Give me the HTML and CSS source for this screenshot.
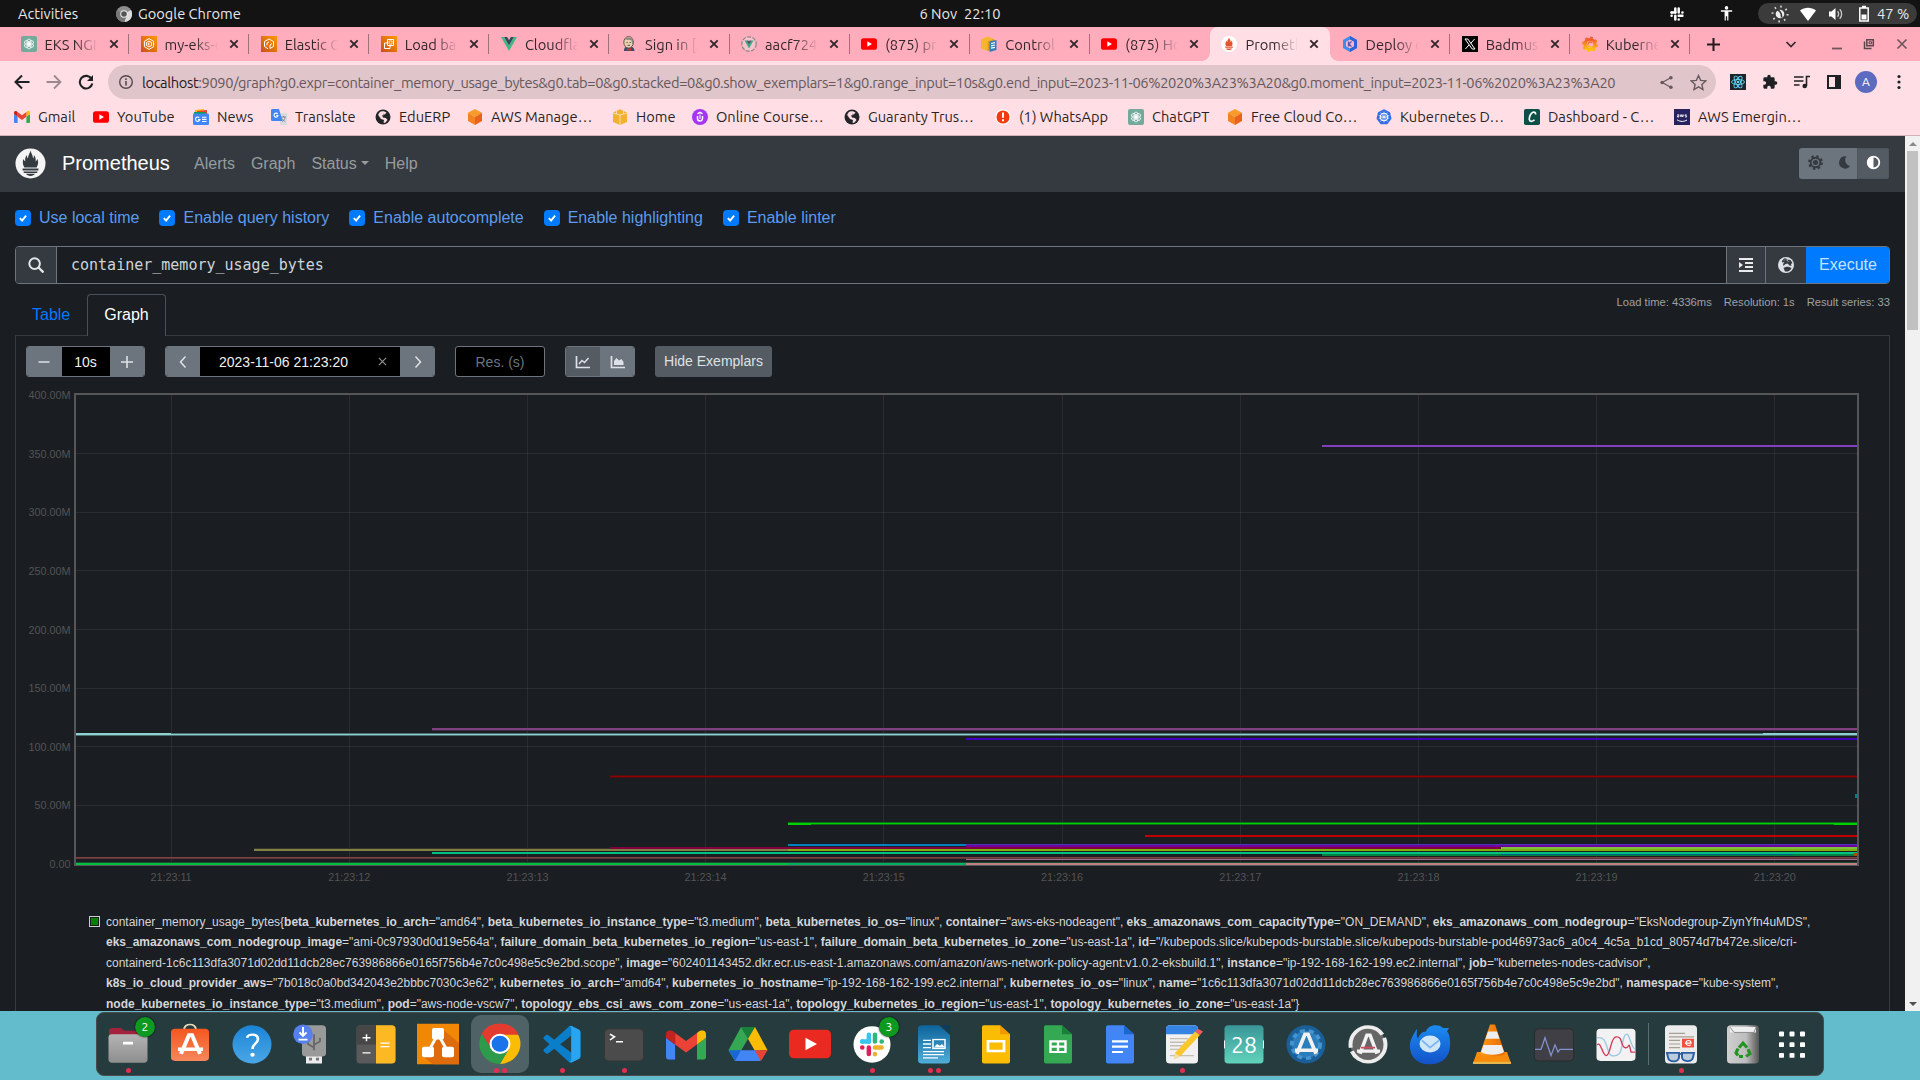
FILE: index.html
```html
<!DOCTYPE html>
<html lang="en">
<head>
<meta charset="utf-8">
<title>Prometheus Time Series Collection and Processing Server</title>
<link rel="stylesheet" href="styles.css">
</head>
<body>
<svg class="defs" aria-hidden="true">
  <linearGradient id="gOrange" x1="0" y1="1" x2="1" y2="0"><stop offset="0" stop-color="#c8511b"/><stop offset="1" stop-color="#f90"/></linearGradient>
  <linearGradient id="gGraf" x1="0" y1="0" x2="0" y2="1"><stop offset="0" stop-color="#f15a29"/><stop offset="1" stop-color="#fcc20f"/></linearGradient>
  <linearGradient id="gSlate" x1="0" y1="0" x2="0" y2="1"><stop offset="0" stop-color="#b4b4b4"/><stop offset="1" stop-color="#8e8e8e"/></linearGradient>
  <linearGradient id="gStore" x1="0" y1="0" x2="0" y2="1"><stop offset="0" stop-color="#f4571f"/><stop offset="1" stop-color="#f6875c"/></linearGradient>
  <linearGradient id="gHelp" x1="0" y1="0" x2="0" y2="1"><stop offset="0" stop-color="#1b84d6"/><stop offset="1" stop-color="#4ba7e6"/></linearGradient>
  <linearGradient id="gWriter" x1="0" y1="0" x2="0" y2="1"><stop offset="0" stop-color="#0d639b"/><stop offset="1" stop-color="#50aed8"/></linearGradient>
  <linearGradient id="gCal" x1="0" y1="0" x2="0" y2="1"><stop offset="0" stop-color="#3a9698"/><stop offset="1" stop-color="#62d3bb"/></linearGradient>
  <linearGradient id="gTrash" x1="0" y1="0" x2="1" y2="0"><stop offset="0" stop-color="#cfcfcf"/><stop offset=".6" stop-color="#bdbdbd"/><stop offset="1" stop-color="#555"/></linearGradient>
  <linearGradient id="gBird" x1="0" y1="0" x2="0" y2="1"><stop offset="0" stop-color="#1b8bf0"/><stop offset="1" stop-color="#1352c8"/></linearGradient>
  <linearGradient id="gCone" x1="0" y1="0" x2="1" y2="0"><stop offset="0" stop-color="#ff9a1a"/><stop offset="1" stop-color="#e86a00"/></linearGradient>

  <symbol id="knot" viewBox="0 0 16 16"><g fill="none" stroke="#fff" stroke-width=".9"><ellipse cx="8" cy="5.6" rx="2.3" ry="3.3" transform="rotate(0 8 8)"/><ellipse cx="8" cy="5.6" rx="2.3" ry="3.3" transform="rotate(60 8 8)"/><ellipse cx="8" cy="5.6" rx="2.3" ry="3.3" transform="rotate(120 8 8)"/><ellipse cx="8" cy="5.6" rx="2.3" ry="3.3" transform="rotate(180 8 8)"/><ellipse cx="8" cy="5.6" rx="2.3" ry="3.3" transform="rotate(240 8 8)"/><ellipse cx="8" cy="5.6" rx="2.3" ry="3.3" transform="rotate(300 8 8)"/></g></symbol>
  <symbol id="gpt" viewBox="0 0 16 16"><rect width="16" height="16" rx="2" fill="#74aa9c"/><use href="#knot" x="1" y="1" width="14" height="14"/></symbol>
  <symbol id="eks" viewBox="0 0 16 16"><rect width="16" height="16" fill="url(#gOrange)"/><path d="M8 2.6l4.6 2.7v5.4L8 13.4l-4.6-2.7V5.3zM8 5l2.6 1.5v3L8 11l-2.6-1.5v-3z" fill="none" stroke="#fff"/><path d="M7.300 6.500v3M9 6.500L7.500 8 9 9.500" fill="none" stroke="#fff" stroke-width=".8"/></symbol>
  <symbol id="ecs" viewBox="0 0 16 16"><rect width="16" height="16" fill="url(#gOrange)"/><path d="M7 12.800L3.500 10.500V5.500L8 3l4.500 2.500v5L9 12.500V9l2-1.500" fill="none" stroke="#fff"/><path d="M6 9.500V7l2-1" fill="none" stroke="#fff"/></symbol>
  <symbol id="ec2" viewBox="0 0 16 16"><rect width="16" height="16" fill="url(#gOrange)"/><path d="M6.500 3.500h6v6h-6zM9 9.500v3H3.500V7H6.500" fill="none" stroke="#fff"/><path d="M8 5h3v3H8z" fill="none" stroke="#fff" stroke-width=".7"/></symbol>
  <symbol id="vue" viewBox="0 0 16 16"><path d="M0 1h3.200L8 9.400 12.800 1H16L8 15z" fill="#41b883"/><path d="M3.200 1h3L8 4.200 9.800 1h3L8 9.400z" fill="#35495e"/></symbol>
  <symbol id="jenk" viewBox="0 0 16 16"><path d="M3 15c0-4 2-5 5-5s5.500 2 5.500 5z" fill="#3b4a66"/><ellipse cx="7.600" cy="6.300" rx="4.800" ry="5.800" fill="#e8cfae" stroke="#594b42" stroke-width=".9"/><path d="M3.600 3.600C5 .8 11 .6 12 5c.8 2 .5 3.500 0 4.500-1-1.500-1-3.500-1.500-5-2-1.200-4.500-.5-6.900-.9z" fill="#8b8580"/><path d="M5.500 6.500h1.200m2 0h1.200M6.500 9.300h2.500" stroke="#3a302c" stroke-width=".8"/><path d="M6 12l2 1 2-1v3l-2-1-2 1z" fill="#c33"/></symbol>
  <symbol id="globev" viewBox="0 0 16 16"><circle cx="8" cy="8" r="7.200" fill="#f8c3cd" stroke="#8a8589" stroke-width="1.200" stroke-dasharray="4 1.300"/><path d="M3.500 4.500h2.200L8 8.500l2.300-4h2.200L8 12.600z" fill="#41a883"/><path d="M5.700 4.500h1.600L8 5.700l.7-1.200h1.600L8 8.500z" fill="#35495e"/></symbol>
  <symbol id="yt" viewBox="0 0 16 16"><rect y="2.200" width="16" height="11.600" rx="2.600" fill="#f00"/><path d="M6.300 5.300v5.400L11 8z" fill="#fff"/></symbol>
  <symbol id="ctl" viewBox="0 0 16 16"><path d="M0 3.500L6.500.5 13 3v9.500L6.500 15 0 12.500z" fill="#f4b52f"/><path d="M6.500 5.500L13 3v9.500L6.500 15z" fill="#e29a1e"/><path d="M8.500 5.500l7-1.500v10l-7 2z" fill="#2f7fb8"/><path d="M10 7.500l4-.8M10 9.800l4-.8M10 12.200l4-.8" stroke="#fff" stroke-width="1.200"/></symbol>
  <symbol id="prom" viewBox="0 0 16 16"><circle cx="8" cy="8" r="8" fill="#fff"/><path d="M8 1.500c.4 2 2 2.700 1.700 4.700.8-.5.8-1.300.7-2 1.400 1.800 1.400 4.300.5 5.800H5.100c-1-1.800-.8-3.800.5-5.600 0 .8.200 1.400.7 1.800C6 4 7.800 3.300 8 1.500zM4.200 10.600h7.600v1.200H4.200zM5 12.400h6c-.7 2.300-5.300 2.300-6 0z" fill="#e6522c"/></symbol>
  <symbol id="promlogo" viewBox="0 0 32 32"><circle cx="16" cy="16" r="15.500" fill="#f4f4f4"/><path d="M16 2.500c.5 3 2.600 4.600 2.600 8.300.9-1 1-2.300.9-3.700 2.200 2.400 1.800 5 1.900 6.900.9-.8 1.500-1.500 1.900-2.600 1.200 3.500.4 6.400-1 8.600H9.700c-1.700-2.500-2-5-1.200-8.600.5 1.100 1.100 1.800 2 2.600 0-2.500-.3-4.500 1.900-6.900 0 1.500.1 2.700 1 3.700C13.400 7.400 15.500 5.500 16 2.500zM7.800 21.200h16.400v2H7.800zM9 24.300h14v1.400H9zM11.500 26.700h9c-1 2.800-8 2.800-9 0z" fill="#343a40"/></symbol>
  <symbol id="hex" viewBox="0 0 16 16"><path d="M8 0l7 4v8l-7 4-7-4V4z" fill="#3a8df2"/><path d="M8 0l7 4v8l-7 4z" fill="#2f62d8"/><path d="M8 3.500l4 2.300v4.400l-4 2.300-4-2.300V5.800z" fill="#fbb5c4"/><path d="M6.500 5.500v5M9.500 5.500L6.800 8l2.700 2.500" stroke="#5b4fb8" stroke-width="1.200" fill="none"/></symbol>
  <symbol id="x" viewBox="0 0 16 16"><rect width="16" height="16"/><path d="M3 3h2.800l7.200 10h-2.800zM12.600 3L8.700 7.400M7.200 8.800L3.400 13" fill="none" stroke="#fff"/></symbol>
  <symbol id="graf" viewBox="0 0 16 16"><circle cx="8" cy="8.500" r="5" fill="none" stroke="url(#gGraf)" stroke-width="3.200"/><circle cx="8" cy="8.500" r="7" fill="none" stroke="url(#gGraf)" stroke-width="1.800" stroke-dasharray="2.700 2.800"/><path d="M10.500 10.200a2.600 2.600 0 1 1-.2-3.300" fill="none" stroke="url(#gGraf)" stroke-width="1.300"/></symbol>
  <symbol id="gm" viewBox="0 0 48 36"><path d="M3.300 36h7.600V17.500L0 9.300v23.400C0 34.500 1.500 36 3.300 36z" fill="#4285f4"/><path d="M37.100 36h7.600c1.800 0 3.300-1.500 3.300-3.300V9.300l-10.900 8.200z" fill="#34a853"/><path d="M37.100 3.300v14.200L48 9.300V5c0-4-4.600-6.300-7.900-3.900z" fill="#fbbc04"/><path d="M10.900 17.500V3.300L24 13.100 37.100 3.300v14.200L24 27.300z" fill="#ea4335"/><path d="M0 5v4.300l10.900 8.200V3.300L7.900 1.100C4.600-1.300 0 1 0 5z" fill="#c5221f"/></symbol>
  <symbol id="news" viewBox="0 0 16 16"><path d="M2 1l9-1 .6 5H2z" fill="#fbbc04"/><path d="M4 2l10-1v5H4z" fill="#ea4335"/><path d="M1 3h12v4H1z" fill="#0c9d58"/><rect y="4.500" width="16" height="11.500" rx="1.200" fill="#4285f4"/><path d="M6.300 8.600a2.200 2.200 0 1 0 .6 2H5M9 8.300h4.500M9 10.400h4.500M9 12.500h4.500" fill="none" stroke="#fff" stroke-width="1.100"/></symbol>
  <symbol id="tr" viewBox="0 0 16 16"><path d="M7 4h9v12H9.500z" fill="#d8dbe0"/><path d="M0 1.300C0 .6.600 0 1.300 0H8l3.500 12H1.300C.6 12 0 11.400 0 10.700z" fill="#4285f4"/><path d="M6.700 5a2 2 0 1 0 .3 1.500H5.300" fill="none" stroke="#fff" stroke-width="1.100"/><path d="M10 8h5M12.500 7v1M11 12.500c2-1 3-2.500 3-4.500M11.200 9.500c.5 1.500 1.700 2.500 3 3" stroke="#777" stroke-width=".8" fill="none"/></symbol>
  <symbol id="globe" viewBox="0 0 16 16"><circle cx="8" cy="8" r="7.500" fill="#222428"/><path d="M6 2.500c2.500-.5 3.500 0 5.500 1L9.500 6 7 6.500 8 8.500l3 .5 1.500 2-2.500 3-1.500-.5.500-2.500-3-1-2.800-4C3.500 4.500 4.500 3 6 2.500z" fill="#fbdbe2"/><path d="M8 4.500L11 6.500l3-.5c0 2-.5 3-1.500 4L10 8z" fill="#222428"/></symbol>
  <symbol id="cube" viewBox="0 0 16 16"><path d="M8 0l7 3.800L8 8 1 3.800z" fill="#f99b2b"/><path d="M1 3.800L8 8v8l-7-4z" fill="#f58220"/><path d="M15 3.800L8 8v8l7-4z" fill="#e9631a"/></symbol>
  <symbol id="crate" viewBox="0 0 16 16"><path d="M1 3.500L8 .3l7 3.200V13l-7 3-7-3z" fill="#f2b12e"/><path d="M1 4l7 2 7-2M8 6v10M4.500 5V2M11.500 5V2" stroke="#fbe0c0" stroke-width=".9" fill="none"/></symbol>
  <symbol id="udemy" viewBox="0 0 16 16"><circle cx="8" cy="8" r="8" fill="#a435f0"/><path d="M5.500 7v2.500a2.500 2.500 0 0 0 5 0V7M5.500 4.800L8 3.400l2.500 1.400" fill="none" stroke="#fff" stroke-width="1.500"/><path d="M8 5.500V10" stroke="#fff"/></symbol>
  <symbol id="alert" viewBox="0 0 16 16"><circle cx="8" cy="8" r="7.200" fill="#f33b0c" stroke="#fff" stroke-width="1.300"/><path d="M8 3.500v5.300M8 10.200v2" stroke="#fff" stroke-width="2"/></symbol>
  <symbol id="k8s" viewBox="0 0 16 16"><path d="M8 .3l6 2.900 1.500 6.500-4.200 5.500H4.700L.5 9.700 2 3.200z" fill="#326ce5"/><circle cx="8" cy="8" r="3.700" fill="none" stroke="#fff" stroke-width="1.100"/><path d="M8 2.500v11M2.700 6.500l10.600 3M13.300 6.500L2.700 9.500M4.500 12.500l7-9M11.500 12.500l-7-9" stroke="#fff" stroke-width=".6"/></symbol>
  <symbol id="cdash" viewBox="0 0 16 16"><rect width="16" height="16" rx="1.800" fill="#0b4f46"/><path d="M11.500 5.500c.5-2-1-2.700-2.500-2.200C6.500 4.200 5 8 5.300 10.500c.3 2.600 3.500 2.200 5.200.3" fill="none" stroke="#fff" stroke-width="1.700"/></symbol>
  <symbol id="awsb" viewBox="0 0 16 16"><rect width="16" height="16" fill="#272260"/><path d="M3 10.800c3.500 2.200 7 2 10 .2" stroke="#fff" fill="none"/><path d="M3.200 5.800h1.600V8H3.400V6.900h1.400M6.200 5.500L7 8l.9-2.500L8.800 8l.8-2.500M12.600 5.800h-1.500v1h1.500V8H11" stroke="#fff" stroke-width=".8" fill="none"/></symbol>
  <symbol id="close" viewBox="0 0 10 10"><path d="M1.300 1.300l7.400 7.400M8.700 1.300L1.300 8.700" stroke="currentColor" stroke-width="1.900"/></symbol>
  <symbol id="slackw" viewBox="0 0 16 16"><g stroke-width="2.500" stroke-linecap="round" fill="none"><path d="M6.300 2.500v4M2.600 6.400h.1" stroke="var(--a)"/><path d="M2.700 6.400h3.600" stroke="var(--a)"/><path d="M9.700 2.600v3.800M13.400 6.400h.1" stroke="var(--b)"/><path d="M13.400 9.700H9.700M9.700 13.400v.1" stroke="var(--c)"/><path d="M6.300 13.400V9.700M2.600 9.700h.1" stroke="var(--d)"/></g></symbol>
</svg>

<header class="topbar">
  <div class="tb-left"><span class="act">Activities</span>
    <svg class="tb-chrome" viewBox="0 0 16 16"><circle cx="8" cy="8" r="8" fill="#8d8d8d"/><path d="M8 8L15 4a8 8 0 0 1-6 12z" fill="#dcdcdc"/><path d="M1 4.200A8 8 0 0 0 8 16l3-6z" fill="#777"/><circle cx="8" cy="8" r="3.800" fill="#eee"/><circle cx="8" cy="8" r="2.800" fill="#555"/></svg>
    <span class="gc">Google Chrome</span></div>
  <div class="clock">6 Nov&nbsp; 22:10</div>
  <div class="tb-right">
    <svg class="ic-slack" viewBox="0 0 16 16"><use href="#slackw"/></svg>
    <svg class="ic-acc" viewBox="0 0 16 16" fill="#fff"><circle cx="8" cy="2" r="1.900"/><path d="M2 4.500h12V6H10v9.500H8.700V11H7.300v4.500H6V6H2z"/></svg>
    <div class="pill">
      <svg viewBox="0 0 18 18"><circle cx="9" cy="9" r="4.300" fill="#eee"/><path d="M6 5c2 0 5 3 4.500 7.500" stroke="#3b3b3b" stroke-width="1.600" fill="none"/><circle cx="9" cy="9" r="7.500" fill="none" stroke="#ddd" stroke-width="2" stroke-dasharray="1.500 4.400"/></svg>
      <svg viewBox="0 0 18 18"><path d="M1 5.500C5.500 1.700 12.500 1.700 17 5.500L9 16z" fill="#fff"/></svg>
      <svg viewBox="0 0 18 18"><path d="M2 6.500h2.500L8.500 3v12l-4-3.500H2z" fill="#fff"/><path d="M10.500 6.300c1.500 1.500 1.500 4 0 5.400M12.700 4.300c2.600 2.500 2.600 7 0 9.400" stroke="#ccc" stroke-width="1.300" fill="none"/></svg>
      <svg viewBox="0 0 18 18"><path d="M7 1.500h4M4.800 3h8.400v13H4.800z" fill="none" stroke="#fff" stroke-width="1.500"/><path d="M6.500 9.500h5v5h-5z" fill="#fff"/></svg>
      <span>47 %</span>
    </div>
  </div>
</header>

<div class="tabs">
  <div class="tab"><svg><use href="#gpt"/></svg><b>EKS NGINX</b><svg class="x"><use href="#close"/></svg></div>
  <div class="tab"><svg><use href="#eks"/></svg><b>my-eks-cluster</b><svg class="x"><use href="#close"/></svg></div>
  <div class="tab"><svg><use href="#ecs"/></svg><b>Elastic Container</b><svg class="x"><use href="#close"/></svg></div>
  <div class="tab"><svg><use href="#ec2"/></svg><b>Load balancers</b><svg class="x"><use href="#close"/></svg></div>
  <div class="tab"><svg><use href="#vue"/></svg><b>Cloudflare</b><svg class="x"><use href="#close"/></svg></div>
  <div class="tab"><svg><use href="#jenk"/></svg><b>Sign in [Jenkins]</b><svg class="x"><use href="#close"/></svg></div>
  <div class="tab"><svg><use href="#globev"/></svg><b>aacf724d</b><svg class="x"><use href="#close"/></svg></div>
  <div class="tab"><svg><use href="#yt"/></svg><b>(875) prom</b><svg class="x"><use href="#close"/></svg></div>
  <div class="tab"><svg><use href="#ctl"/></svg><b>Control T</b><svg class="x"><use href="#close"/></svg></div>
  <div class="tab nosep"><svg><use href="#yt"/></svg><b>(875) How</b><svg class="x"><use href="#close"/></svg></div>
  <div class="tab active"><svg><use href="#prom"/></svg><b>Prometheus</b><svg class="x"><use href="#close"/></svg></div>
  <div class="tab"><svg><use href="#hex"/></svg><b>Deploy on</b><svg class="x"><use href="#close"/></svg></div>
  <div class="tab"><svg><use href="#x"/></svg><b>Badmus K</b><svg class="x"><use href="#close"/></svg></div>
  <div class="tab"><svg><use href="#graf"/></svg><b>Kubernetes</b><svg class="x"><use href="#close"/></svg></div>
  <svg class="plus" viewBox="0 0 12 12"><path d="M6 0v12M0 6h12" stroke="#26191d" stroke-width="1.900"/></svg>
  <div class="wins">
    <svg viewBox="0 0 12 12"><path d="M1.500 4L6 8.500 10.500 4" fill="none" stroke="#33262a" stroke-width="1.700"/></svg>
    <svg viewBox="0 0 12 12"><path d="M1 10.500h10" stroke="#6e565c" stroke-width="1.800"/></svg>
    <svg viewBox="0 0 12 12"><path d="M3.800 1.800h6.500v6H3.800zM1.500 3.500v7h7" fill="none" stroke="#5b484e" stroke-width="1.500"/><path d="M6 3.800h2.500v2H6z" fill="none" stroke="#5b484e"/></svg>
    <svg viewBox="0 0 12 12"><path d="M1.500 1.500l9 9M10.500 1.500l-9 9" stroke="#6e565c" stroke-width="1.700"/></svg>
  </div>
</div>

<div class="toolbar">
  <svg class="nav1" viewBox="0 0 16 16"><path d="M15.500 8H2M8 1.500L1.500 8 8 14.500" fill="none" stroke="#1f2023" stroke-width="2"/></svg>
  <svg class="nav2" viewBox="0 0 16 16"><path d="M.5 8H14M8 1.500L14.500 8 8 14.500" fill="none" stroke="#9c898e" stroke-width="1.800"/></svg>
  <svg class="nav3" viewBox="0 0 16 16"><path d="M13.600 5A6.300 6.300 0 1 0 14.300 9.500" fill="none" stroke="#1f2023" stroke-width="2.100"/><path d="M15 1v6H9z" fill="#1f2023"/></svg>
  <div class="omni">
    <svg class="info" viewBox="0 0 16 16"><circle cx="8" cy="8" r="6.300" fill="none" stroke="#55494d" stroke-width="1.400"/><path d="M8 7v4.500M8 4.300v1.600" stroke="#55494d" stroke-width="1.600"/></svg>
    <div class="url"><i>localhost</i>:9090/graph?g0.expr=container_memory_usage_bytes&amp;g0.tab=0&amp;g0.stacked=0&amp;g0.show_exemplars=1&amp;g0.range_input=10s&amp;g0.end_input=2023-11-06%2020%3A23%3A20&amp;g0.moment_input=2023-11-06%2020%3A23%3A20</div>
    <svg class="share" viewBox="0 0 16 16"><path d="M12.500 3L3.500 8l9 5" fill="none" stroke="#67595d" stroke-width="1.300"/><circle cx="12.700" cy="2.900" r="1.900" fill="#67595d"/><circle cx="3.300" cy="8" r="1.900" fill="#67595d"/><circle cx="12.700" cy="13.100" r="1.900" fill="#67595d"/></svg>
    <svg class="star" viewBox="0 0 16 16"><path d="M8 1.500l2 4.500 4.800.5-3.600 3.300 1 4.800L8 12.100l-4.200 2.500 1-4.800L1.200 6.500 6 6z" fill="none" stroke="#67595d" stroke-width="1.300"/></svg>
  </div>
  <svg class="e1" viewBox="0 0 16 16"><rect width="16" height="16" fill="#20232a"/><g fill="none" stroke="#61dafb" stroke-width=".9"><ellipse cx="8" cy="8" rx="6.500" ry="2.500"/><ellipse cx="8" cy="8" rx="6.500" ry="2.500" transform="rotate(60 8 8)"/><ellipse cx="8" cy="8" rx="6.500" ry="2.500" transform="rotate(120 8 8)"/></g><circle cx="8" cy="8" r="1.300" fill="#61dafb"/></svg>
  <svg class="e2" viewBox="0 0 24 24"><path d="M20.500 11H19V7a2 2 0 0 0-2-2h-4V3.500a2.500 2.500 0 0 0-5 0V5H4a2 2 0 0 0-2 2v3.800h1.500a2.700 2.700 0 0 1 0 5.400H2V20a2 2 0 0 0 2 2h3.800v-1.500a2.700 2.700 0 0 1 5.400 0V22H17a2 2 0 0 0 2-2v-4h1.500a2.500 2.500 0 0 0 0-5z" fill="#1f2023"/></svg>
  <svg class="e3" viewBox="0 0 16 16"><path d="M0 3h9.500M0 7h9.500M0 11h5.500M12.500 12V2.500H16" fill="none" stroke="#1f2023" stroke-width="1.600"/><circle cx="10.700" cy="12" r="2.300" fill="#1f2023"/></svg>
  <svg class="e4" viewBox="0 0 14 14"><path d="M1 1h12v12H1z" fill="none" stroke="#1f2023" stroke-width="2"/><path d="M8 1h5v12H8z" fill="#1f2023"/></svg>
  <div class="avatar">A</div>
  <svg class="e6" viewBox="0 0 4 16" fill="#1f2023"><circle cx="2" cy="2.500" r="1.600"/><circle cx="2" cy="8" r="1.600"/><circle cx="2" cy="13.500" r="1.600"/></svg>
</div>

<nav class="bookmarks">
  <a><svg viewBox="0 -6 48 48"><use href="#gm" width="48" height="36"/></svg>Gmail</a>
  <a><svg><use href="#yt"/></svg>YouTube</a>
  <a><svg><use href="#news"/></svg>News</a>
  <a><svg><use href="#tr"/></svg>Translate</a>
  <a><svg><use href="#globe"/></svg>EduERP</a>
  <a><svg><use href="#cube"/></svg>AWS Manage…</a>
  <a><svg><use href="#crate"/></svg>Home</a>
  <a><svg><use href="#udemy"/></svg>Online Course…</a>
  <a><svg><use href="#globe"/></svg>Guaranty Trus…</a>
  <a><svg><use href="#alert"/></svg>(1) WhatsApp</a>
  <a><svg><use href="#gpt"/></svg>ChatGPT</a>
  <a><svg><use href="#cube"/></svg>Free Cloud Co…</a>
  <a><svg><use href="#k8s"/></svg>Kubernetes D…</a>
  <a><svg><use href="#cdash"/></svg>Dashboard - C…</a>
  <a><svg><use href="#awsb"/></svg>AWS Emergin…</a>
</nav>

<div class="view">
<main class="page">
  <nav class="navbar">
    <svg class="logo"><use href="#promlogo"/></svg>
    <span class="brand">Prometheus</span>
    <span class="nl">Alerts</span><span class="nl">Graph</span><span class="nl caret">Status</span><span class="nl">Help</span>
    <div class="theme">
      <span><svg viewBox="0 0 16 16"><circle cx="8" cy="8" r="5.100" fill="none" stroke="#343a40" stroke-width="2"/><circle cx="8" cy="8" r="2.700" fill="#343a40"/><circle cx="8" cy="8" r="6.700" fill="none" stroke="#343a40" stroke-width="2.400" stroke-dasharray="2.600 2.660"/></svg></span>
      <span class="moon"><svg viewBox="0 0 16 16"><path d="M10 1.500A6.500 6.500 0 1 0 14 11.800 6.500 6.500 0 0 1 10 1.500z" fill="#343a40"/></svg></span>
      <span class="on"><svg viewBox="0 0 16 16"><circle cx="8" cy="8" r="6.200" fill="none" stroke="#fff" stroke-width="1.900"/><path d="M8 1.500a6.500 6.500 0 0 0 0 13z" fill="#fff"/></svg></span>
    </div>
  </nav>

  <div class="checks">
    <label><svg viewBox="0 0 16 16"><rect width="16" height="16" rx="4" fill="#007bff"/><path d="M4.800 8.200l2.300 2.300 4-4.800" fill="none" stroke="#fff" stroke-width="1.900"/></svg>Use local time</label>
    <label><svg viewBox="0 0 16 16"><rect width="16" height="16" rx="4" fill="#007bff"/><path d="M4.800 8.200l2.300 2.300 4-4.800" fill="none" stroke="#fff" stroke-width="1.900"/></svg>Enable query history</label>
    <label><svg viewBox="0 0 16 16"><rect width="16" height="16" rx="4" fill="#007bff"/><path d="M4.800 8.200l2.300 2.300 4-4.800" fill="none" stroke="#fff" stroke-width="1.900"/></svg>Enable autocomplete</label>
    <label><svg viewBox="0 0 16 16"><rect width="16" height="16" rx="4" fill="#007bff"/><path d="M4.800 8.200l2.300 2.300 4-4.800" fill="none" stroke="#fff" stroke-width="1.900"/></svg>Enable highlighting</label>
    <label><svg viewBox="0 0 16 16"><rect width="16" height="16" rx="4" fill="#007bff"/><path d="M4.800 8.200l2.300 2.300 4-4.800" fill="none" stroke="#fff" stroke-width="1.900"/></svg>Enable linter</label>
  </div>

  <div class="expr">
    <span class="pre"><svg viewBox="0 0 16 16"><circle cx="6.600" cy="6.600" r="5.300" fill="none" stroke="#e4e6e8" stroke-width="2"/><path d="M10.500 10.500l5 5" stroke="#e4e6e8" stroke-width="2.300"/></svg></span>
    <div class="field">container_memory_usage_bytes</div>
    <span class="btn-a"><svg viewBox="0 0 14 14"><path d="M0 1h14M6 5h8M6 9h8M0 13h14" stroke="#e8eaec" stroke-width="1.900"/><path d="M0 4v6l4-3z" fill="#e8eaec"/></svg></span>
    <span class="btn-b"><svg viewBox="0 0 16 16"><circle cx="8" cy="8" r="8" fill="#dee2e6"/><path d="M6 1.500l2-.3 1 1.300 3.500.5 2 3-1.500 1 .5 2-2-.5-2-2-2 .5-2 2-.5-2L6.500 5 4 5.500 3.800 4zM5.500 11c3-2 5-1.500 8 0-1 3-4 4-6.500 3.500z" fill="#343a40"/><path d="M8.500 3l2 1.500M6 3.500l1-1" stroke="#dee2e6" stroke-width=".8"/></svg></span>
    <span class="exec">Execute</span>
  </div>

  <div class="tabrow">
    <span class="t1">Table</span><span class="t2">Graph</span>
    <div class="stats"><span>Load time: 4336ms</span><span>Resolution: 1s</span><span>Result series: 33</span></div>
  </div>

  <section class="panel">
    <div class="controls">
      <div class="grp g1"><span><svg viewBox="0 0 14 14"><path d="M1.500 7h11" stroke="#dee2e6" stroke-width="1.600"/></svg></span><span class="in">10s</span><span><svg viewBox="0 0 14 14"><path d="M1 7h12M7 1v12" stroke="#dee2e6" stroke-width="1.600"/></svg></span></div>
      <div class="grp g2"><span><svg viewBox="0 0 14 14"><path d="M9.500 1.500L4.500 7l5 5.500" fill="none" stroke="#dee2e6" stroke-width="1.500"/></svg></span><span class="in">2023-11-06 21:23:20<svg viewBox="0 0 10 10"><path d="M1 1l8 8M9 1L1 9" stroke="#8d9297" stroke-width="1.300"/></svg></span><span><svg viewBox="0 0 14 14"><path d="M4.500 1.500l5 5.500-5 5.500" fill="none" stroke="#dee2e6" stroke-width="1.500"/></svg></span></div>
      <div class="res">Res. (s)</div>
      <div class="grp g3"><span class="on"><svg viewBox="0 0 16 16"><path d="M1.500 2v11.500H15" fill="none" stroke="#dee2e6" stroke-width="1.700"/><path d="M4 10l3-3.500 2.500 2L13.500 4" fill="none" stroke="#dee2e6" stroke-width="1.500"/></svg></span><span><svg viewBox="0 0 16 16"><path d="M1.500 2v11.500H15" fill="none" stroke="#dee2e6" stroke-width="1.700"/><path d="M4 11V7l2.500-3L9 6.500 11.500 5 13.500 8v3z" fill="#dee2e6"/></svg></span></div>
      <div class="hide">Hide Exemplars</div>
    </div>

    <svg class="chart" viewBox="16 385 1872 510" width="1872" height="510">
      <g stroke="#fff" stroke-opacity=".07">
        <path d="M171.500 395v469M349.500 395v469M527.500 395v469M705.500 395v469M883.500 395v469M1062.500 395v469M1240.500 395v469M1418.500 395v469M1596.500 395v469M1774.500 395v469"/>
        <path d="M76 453.500h1781M76 512.500h1781M76 570.500h1781M76 629.500h1781M76 688.500h1781M76 746.500h1781M76 805.500h1781"/>
      </g>
      <g class="ylab" text-anchor="end">
        <text x="70.500" y="399">400.00M</text><text x="70.500" y="457.600">350.00M</text><text x="70.500" y="516.200">300.00M</text><text x="70.500" y="574.800">250.00M</text><text x="70.500" y="633.500">200.00M</text><text x="70.500" y="692">150.00M</text><text x="70.500" y="750.700">100.00M</text><text x="70.500" y="809">50.00M</text><text x="70.500" y="868">0.00</text>
      </g>
      <g class="ylab" text-anchor="middle">
        <text x="171" y="881">21:23:11</text><text x="349.300" y="881">21:23:12</text><text x="527.500" y="881">21:23:13</text><text x="705.600" y="881">21:23:14</text><text x="883.800" y="881">21:23:15</text><text x="1062" y="881">21:23:16</text><text x="1240.200" y="881">21:23:17</text><text x="1418.400" y="881">21:23:18</text><text x="1596.600" y="881">21:23:19</text><text x="1774.700" y="881">21:23:20</text>
      </g>
      <path d="M75 394h1783v471H75z" fill="none" stroke="#545658" stroke-width="2"/>
      <path d="M1322 445h535v2h-535z" fill="#8040c0"/>
      <path d="M432 728h1425v2H432z" fill="#803f80"/><path d="M432 730h1425v1H432z" fill="#3d2841"/>
      <path d="M76 733h1781v3H76z" fill="#4c6e70"/><path d="M76 733h95v2H76zM171 734h1592v1H171zM1763 733h94v2h-94z" fill="#8cd0d0"/>
      <path d="M966 738h891v2H966z" fill="#4000c0"/>
      <path d="M610 775h1247v3H610z" fill="#4d0e10"/><path d="M610 776h1247v1H610z" fill="#900000"/>
      <path d="M1855 794h3v4h-3z" fill="#008080"/>
      <path d="M788 822h1069v3H788z" fill="#0b6f13"/><path d="M788 823h1069v1H788zM788 824h23v1h-23zM1834 824h23v1h-23z" fill="#00d000"/>
      <path d="M1145 835h712v2h-712z" fill="#c00000"/>
      <path d="M788 844h178v2H788z" fill="#0080c0"/><path d="M966 844h891v1H966z" fill="#4a35b5"/><path d="M966 845h891v2H966z" fill="#7000a0"/>
      <path d="M610 847h1247v2H610z" fill="#800040"/>
      <path d="M254 848h356v1H254z" fill="#35352a"/><path d="M254 849h1603v2H254z" fill="#808040"/>
      <path d="M788 849h1069v2H788z" fill="#80b010"/><path d="M1501 847h356v2h-356z" fill="#80c040"/>
      <path d="M432 852h1425v2H432z" fill="#00c080"/>
      <path d="M1322 854h535v2h-535z" fill="#008040"/><path d="M1501 854h292v1h-292z" fill="#005f78"/>
      <path d="M76 857h1781v1H76z" fill="#804040"/><path d="M76 858h1781v1H76z" fill="#5e3638"/><path d="M966 859h891v1H966z" fill="#a07090"/>
      <path d="M76 862h1781v1H76z" fill="#1d4a35"/><path d="M76 863h890v2H76z" fill="#00c040"/><path d="M788 863h178v2H788z" fill="#00b060"/><path d="M966 863h891v2H966z" fill="#c08080"/>
      <path d="M1854 853h3v3h-3z" fill="#a05000"/>
    </svg>

    <div class="legend">
      <i class="sw"></i>
      <div class="ltext">
        <p>container_memory_usage_bytes{<b>beta_kubernetes_io_arch</b>="amd64", <b>beta_kubernetes_io_instance_type</b>="t3.medium", <b>beta_kubernetes_io_os</b>="linux", <b>container</b>="aws-eks-nodeagent", <b>eks_amazonaws_com_capacityType</b>="ON_DEMAND", <b>eks_amazonaws_com_nodegroup</b>="EksNodegroup-ZiynYfn4uMDS",</p>
        <p><b>eks_amazonaws_com_nodegroup_image</b>="ami-0c97930d0d19e564a", <b>failure_domain_beta_kubernetes_io_region</b>="us-east-1", <b>failure_domain_beta_kubernetes_io_zone</b>="us-east-1a", <b>id</b>="/kubepods.slice/kubepods-burstable.slice/kubepods-burstable-pod46973ac6_a0c4_4c5a_b1cd_80574d7b472e.slice/cri-</p>
        <p>containerd-1c6c113dfa3071d02dd11dcb28ec763986866e0165f756b4e7c0c498e5c9e2bd.scope", <b>image</b>="602401143452.dkr.ecr.us-east-1.amazonaws.com/amazon/aws-network-policy-agent:v1.0.2-eksbuild.1", <b>instance</b>="ip-192-168-162-199.ec2.internal", <b>job</b>="kubernetes-nodes-cadvisor",</p>
        <p><b>k8s_io_cloud_provider_aws</b>="7b018c0a0bd342043e2bbbc7030c3e62", <b>kubernetes_io_arch</b>="amd64", <b>kubernetes_io_hostname</b>="ip-192-168-162-199.ec2.internal", <b>kubernetes_io_os</b>="linux", <b>name</b>="1c6c113dfa3071d02dd11dcb28ec763986866e0165f756b4e7c0c498e5c9e2bd", <b>namespace</b>="kube-system",</p>
        <p><b>node_kubernetes_io_instance_type</b>="t3.medium", <b>pod</b>="aws-node-vscw7", <b>topology_ebs_csi_aws_com_zone</b>="us-east-1a", <b>topology_kubernetes_io_region</b>="us-east-1", <b>topology_kubernetes_io_zone</b>="us-east-1a"}</p>
      </div>
    </div>
  </section>
</main>
<div class="scroll"><i class="up"></i><i class="thumb"></i><i class="down"></i></div>
</div>

<footer class="desk">
  <div class="dock">
    <div class="app d1"><svg viewBox="0 0 42 46"><path d="M2 8a3 3 0 0 1 3-3h9l3 3h20a3 3 0 0 1 3 3v8H2z" fill="#a5223f"/><rect x="1.500" y="12" width="39" height="32" rx="3.500" fill="url(#gSlate)"/><path d="M16 22h10" stroke="#fff" stroke-width="3"/></svg><em>2</em></div>
    <div class="app"><svg viewBox="0 0 42 46"><path d="M15 7a6 6 0 0 1 12 0" fill="none" stroke="#e6d9b8" stroke-width="2"/><rect x="2" y="6" width="38" height="36" rx="4" fill="url(#gStore)"/><path d="M12 34L20 13h3l8 21M9 29h25" fill="none" stroke="#fff" stroke-width="4"/></svg></div>
    <div class="app"><svg viewBox="0 0 42 46"><ellipse cx="21" cy="23.500" rx="19.500" ry="21.500" fill="url(#gHelp)"/><path d="M16 16c1-5 11-5 11 1.500 0 5-5.500 5-5.500 11" fill="none" stroke="#fff" stroke-width="2.600"/><circle cx="21.500" cy="35" r="2.200" fill="#fff"/></svg></div>
    <div class="app"><svg viewBox="0 0 42 46"><path d="M13 36h16v9H13z" fill="#ececec"/><rect x="9" y="2" width="24" height="35" rx="4" fill="#9a9a9a"/><path d="M16 40h3M23 40h3" stroke="#777" stroke-width="3"/><path d="M21 12v18M21 27l-6-4v-4M21 24l6-4v-4" fill="none" stroke="#666" stroke-width="1.800"/><ellipse cx="10" cy="12" rx="9.800" ry="11" fill="#5580ee"/><path d="M10 4v8M6.500 10l3.500 4 3.500-4M5.500 18h9" fill="none" stroke="#fff" stroke-width="2"/></svg></div>
    <div class="app"><svg viewBox="0 0 42 46"><rect x="1.500" y="2" width="39" height="43" rx="4" fill="#5a5a5a"/><path d="M1.500 23.500h20V2h-16a4 4 0 0 0-4 4z" fill="#474747"/><path d="M21 2h15.500a4 4 0 0 1 4 4v35a4 4 0 0 1-4 4H21z" fill="#fdb924"/><path d="M7.500 16h8M11.500 12v8M7.500 33h8M25.500 22h9M25.500 26h9" stroke="#fff" stroke-width="1.500"/></svg></div>
    <div class="app"><svg viewBox="0 0 42 46"><path d="M0 0h42v46H0z" fill="#f08705"/><path d="M25 6l17 16v24H16L5 36l14-20z" fill="#df6c0c"/><path d="M21 12L11 32M21 12l10 20" stroke="#fff" stroke-width="3"/><rect x="15" y="5" width="12" height="13" rx="2" fill="#fff"/><rect x="5" y="26" width="12" height="12" rx="2" fill="#fff"/><rect x="25" y="26" width="12" height="12" rx="2" fill="#fff"/></svg></div>
    <div class="app run"><svg viewBox="0 0 42 46"><g transform="translate(0 -1) scale(1 1.080)"><path d="M21 22L2.800 11.500A21 21 0 0 1 39.200 11.500z" fill="#ea4335"/><path d="M21 1a21 21 0 0 0-18.200 10.500L12 27l9-14.500h18.200A21 21 0 0 0 21 1z" fill="#e33b2e"/><path d="M39.200 12.500H21l9 14L21 43a21 21 0 0 0 18.200-30.500z" fill="#fbbc04"/><path d="M2.800 12A21 21 0 0 0 21 43l9-15.500-9 4-9-4.500z" fill="#2e9b4b"/><circle cx="21" cy="22" r="10.500" fill="#fff"/><circle cx="21" cy="22" r="8.400" fill="#1a73e8"/></g></svg></div>
    <div class="app d1"><svg viewBox="0 0 42 46"><g transform="translate(2.500 2.500) scale(1.540 1.730)"><path d="M23.150 2.587L18.210.210a1.494 1.494 0 0 0-1.705.290l-9.460 8.630-4.120-3.128a.999.999 0 0 0-1.276.057L.327 7.261A1 1 0 0 0 .326 8.740L3.899 12 .326 15.260a1 1 0 0 0 .001 1.479L1.650 17.940a.999.999 0 0 0 1.276.057l4.120-3.128 9.460 8.630a1.492 1.492 0 0 0 1.704.290l4.942-2.377A1.500 1.500 0 0 0 24 20.060V3.939a1.500 1.500 0 0 0-.850-1.352zm-5.146 14.861L10.826 12l7.178-5.448v10.896z" fill="#0a7ec8"/><path d="M16.800.3l1.400-.1 4.950 2.400.85 1.400v16l-.85 1.400-4.940 2.400-1.400-.2 1.200-1.200V1.500z" fill="#2aa4ee"/></g></svg></div>
    <div class="app d1"><svg viewBox="0 0 42 46"><rect x="1.500" y="6" width="39" height="36" rx="4" fill="#4b4b4b" stroke="#353535"/><path d="M7 12l4.500 3L7 18.500M13 20.500h7" fill="none" stroke="#fff" stroke-width="1.700"/></svg></div>
    <div class="app"><svg viewBox="0 0 42 46"><g transform="translate(1 7.500) scale(.835 .920)"><use href="#gm" width="48" height="36"/></g></svg></div>
    <div class="app"><svg viewBox="0 0 42 46"><path d="M14 4h14l-7 13z" fill="#188038"/><path d="M14 4l7 13L8 42 1.500 30z" fill="#34a853"/><path d="M28 4l12.500 26H27.500L21 17z" fill="#fbbc04"/><path d="M9 30h24L33.500 42H8z" fill="#4285f4"/><path d="M1.500 30H14L8 42z" fill="#1967d2"/><path d="M27.500 30h13L34 42z" fill="#ea4335"/></svg></div>
    <div class="app"><svg viewBox="0 0 42 46"><rect x="0" y="7" width="42" height="32" rx="5" fill="#ea2a20"/><path d="M16.500 16v14L28 23z" fill="#fff"/></svg></div>
    <div class="app d1 slack"><svg viewBox="0 0 42 46"><ellipse cx="21" cy="23.500" rx="18.500" ry="20.500" fill="#fff"/><g transform="translate(6.500 7.500) scale(.9 1)"><use href="#slackw" width="32" height="32"/></g></svg><em>3</em></div>
    <div class="app d2"><svg viewBox="0 0 42 46"><path d="M9 2h17l11 11v28a4 4 0 0 1-4 4H9a4 4 0 0 1-4-4V6a4 4 0 0 1 4-4z" fill="url(#gWriter)"/><path d="M29 2h8v9z" fill="#0b3d5e"/><path d="M10 19h8M10 23h8M10 27h8M10 31.500h21M10 35h21M10 38.500h15" stroke="#fff" stroke-width="1.500"/><rect x="20" y="18" width="12" height="10" fill="none" stroke="#fff" stroke-width="1.500"/><path d="M21 27l3-4 3 2 2-2 3 4z" fill="#fff"/></svg></div>
    <div class="app"><svg viewBox="0 0 42 46"><path d="M9 2h16l10 10v31a2 2 0 0 1-2 2H9a2 2 0 0 1-2-2V4a2 2 0 0 1 2-2z" fill="#fbbc04"/><path d="M25 2l10 10H25z" fill="#f29900"/><path d="M13 20h16v11H13z" fill="none" stroke="#fff" stroke-width="2.800"/></svg></div>
    <div class="app"><svg viewBox="0 0 42 46"><path d="M9 2h16l10 10v31a2 2 0 0 1-2 2H9a2 2 0 0 1-2-2V4a2 2 0 0 1 2-2z" fill="#34a853"/><path d="M25 2l10 10H25z" fill="#188038"/><path d="M13.500 20h15v12h-15zM13.500 26h15M21 20v12" fill="none" stroke="#fff" stroke-width="2.400"/></svg></div>
    <div class="app"><svg viewBox="0 0 42 46"><path d="M9 2h16l10 10v31a2 2 0 0 1-2 2H9a2 2 0 0 1-2-2V4a2 2 0 0 1 2-2z" fill="#4285f4"/><path d="M25 2l10 10H25z" fill="#1967d2"/><path d="M13 20h16M13 26h16M13 32h11" stroke="#fff" stroke-width="2.500"/></svg></div>
    <div class="app d1"><svg viewBox="0 0 42 46"><rect x="5" y="2" width="32" height="43" rx="4" fill="#f1f1f1"/><path d="M9 2h24a4 4 0 0 1 4 4v6H5V6a4 4 0 0 1 4-4z" fill="#3584e4"/><path d="M9 17h18M9 21h15M9 25h12M9 29h9M9 36h24" stroke="#c4beb4" stroke-width="1.500"/><path d="M14 33L34 9l5 4L19 37l-6 3z" fill="#f9c62c"/><path d="M34 9l3-3 5 3-3 4z" fill="#ed5b5b"/><path d="M14 33l5 4-6 3z" fill="#f4dcb0"/></svg></div>
    <div class="app cal"><svg viewBox="0 0 42 46"><rect x="1.500" y="2" width="39" height="43" rx="4" fill="url(#gCal)"/><path d="M1.500 19v9M40.500 19v9" stroke="#fff"/></svg><span>28</span></div>
    <div class="app"><svg viewBox="0 0 42 46"><ellipse cx="21" cy="23.500" rx="19.500" ry="21.500" fill="#1b5f99"/><ellipse cx="21" cy="23.500" rx="14" ry="15.500" fill="#2b7dbb" stroke="#4596cf" stroke-width="4" stroke-dasharray="5 4"/><path d="M12 34l8-22h3l8 22M10 30h23" fill="none" stroke="#f2f2f2" stroke-width="3.800"/></svg></div>
    <div class="app"><svg viewBox="0 0 42 46"><ellipse cx="21" cy="23.500" rx="17.500" ry="19.500" fill="#666" stroke="#ededed" stroke-width="4" stroke-dasharray="50 4"/><path d="M13 34l7-21h3l7 21M10 31h23" fill="none" stroke="#f2f2f2" stroke-width="3.600"/><path d="M14 27h14" stroke="#d34b60" stroke-width="2"/></svg></div>
    <div class="app"><svg viewBox="0 0 42 46"><path d="M8 6C4 13 0 20 1 28c1 12 10 18 20 18 12 0 21-9 20-24 0-7-1-11-3-13l2-4-6 0C28-1 18 3 17 9c-4 0-7 4-8 8-2-4-1-8-1-11z" fill="url(#gBird)"/><ellipse cx="21" cy="23" rx="10.500" ry="9.500" fill="#cfe6fb"/><path d="M13 19l8 8 9-8" fill="none" stroke="#7cb6ee" stroke-width="2"/></svg></div>
    <div class="app"><svg viewBox="0 0 42 46"><path d="M6 32h30l4 13H2z" fill="#f98b0b"/><path d="M2 43h38v2.500H2z" fill="#e8b54a"/><path d="M19 1h5l10 33c-4 4-21 4-25 0z" fill="url(#gCone)"/><path d="M17 9h9l2.500 8h-14zM12.500 24h18l2.500 8c-5 4-18 4-23 0z" fill="#eee"/></svg></div>
    <div class="app"><svg viewBox="0 0 42 46"><rect x="1.500" y="6" width="39" height="36" rx="4" fill="#403f45" stroke="#2a2a2a"/><path d="M2 29h6l4-13 6 20 4-12 3 8 2-3h13" fill="none" stroke="#8093cf" stroke-width="1.300"/></svg></div>
    <div class="app"><svg viewBox="0 0 42 46"><rect x="1.500" y="6" width="39" height="36" rx="4" fill="#f2f2f2"/><path d="M2 16c8-1 8 4 12 17 2 5 8 4 11 0 3-8 3-22 7-21 3 1 3 12 8 17" fill="none" stroke="#9fc6e4" stroke-width="1.400"/><path d="M2 24c4-5 5 11 9 12 5 0 4-20 10-21 7-1 4 10 9 12 5 2 3-10 6 5h4" fill="none" stroke="#d23c5b" stroke-width="1.400"/></svg></div>
    <div class="dsep"></div>
    <div class="app d1"><svg viewBox="0 0 42 46"><rect x="5" y="2" width="32" height="43" rx="4" fill="#ececec"/><path d="M9 11h16M9 15h25M9 19h11M9 23h11M9 27h11" stroke="#a79f90" stroke-width="1.400"/><path d="M22 17h12v10H22z" fill="#f0503c"/><path d="M25 22h6c0-4-5-4-5 0 0 3 3 3 5 2" fill="none" stroke="#fff" stroke-width="1.200"/><path d="M7 33h12v5c0 6-10 6-11 0zM22 33h12l-1 5c-1 6-11 5-11 0zM19 34h3" fill="#bcd" stroke="#2b5fa8" stroke-width="2"/></svg></div>
    <div class="app"><svg viewBox="0 0 42 46"><rect x="5" y="2" width="32" height="43" rx="4" fill="url(#gTrash)"/><path d="M8 4h26v6H8z" fill="#eee"/><path d="M8 4l4 6h20l2-6" fill="none" stroke="#888"/><path d="M17 27l4-5 4 5M26 29l2 5-4 3M21 37h-4M16 36l-2-3 2-5" fill="none" stroke="#259225" stroke-width="3.200"/></svg></div>
    <div class="app grid"><svg viewBox="0 0 28 32" fill="#fff"><g id="r"><rect x="1" y="2" width="5" height="5.500" rx="1"/><rect x="11.500" y="2" width="5" height="5.500" rx="1"/><rect x="22" y="2" width="5" height="5.500" rx="1"/></g><use href="#r" y="12"/><use href="#r" y="24"/></svg></div>
  </div>
</footer>
</body>
</html>
```
FILE: styles.css
```css
* { box-sizing: border-box; }
body { margin: 0; width: 1920px; height: 1080px; overflow: hidden; display: flex; flex-direction: column; background: #62bccb; font-family: "Liberation Sans", Arial, sans-serif; }
svg { display: block; flex: none; }
.defs { position: absolute; width: 0; height: 0; }
.topbar, .tabs, .toolbar, .bookmarks { font-family: Ubuntu, "Noto Sans", sans-serif; font-size: 14.67px; flex: none; white-space: nowrap; }

.topbar { height: 27px; background: #131313; color: #e8e8e8; display: grid; grid-template-columns: 1fr auto 1fr; align-items: center; }
.tb-left { display: flex; align-items: center; padding-left: 18px; }
.act { width: 98px; }
.tb-chrome { width: 16px; height: 16px; margin-right: 6px; }
.tb-right { display: flex; align-items: center; justify-content: flex-end; padding-right: 3px; }
.ic-slack { width: 16px; height: 16px; margin-right: 34px; --a: #fff; --b: #fff; --c: #fff; --d: #fff; }
.ic-acc { width: 15px; height: 15px; margin-right: 24px; }
.pill { display: flex; align-items: center; gap: 10px; height: 21px; width: 159px; border-radius: 11px; background: #3b3b3b; padding-left: 13px; }
.pill svg { width: 18px; height: 18px; }
.pill span { margin-left: -6px; }

.tabs { height: 34px; background: #ffadbd; display: flex; align-items: center; padding-left: 9px; color: #33262a; }
.tab { width: 120.1px; height: 34px; display: flex; align-items: center; padding-left: 11.5px; position: relative; }
.tab > svg { width: 16px; height: 16px; }
.tab b { font-weight: 400; width: 54px; margin-left: 8px; overflow: hidden; -webkit-mask-image: linear-gradient(90deg, #000 55%, transparent 98%); mask-image: linear-gradient(90deg, #000 55%, transparent 98%); }
.tab .x { width: 10px; height: 10px; margin-left: 10px; color: #33262a; }
.tab::after { content: ""; position: absolute; right: 0; top: 7px; width: 1px; height: 20px; background: #a0707b; }
.tab.nosep::after { display: none; }
.tab.active { background: #ffdfe5; border-radius: 8px 8px 0 0; }
.tab.active::before, .tab.active::after { content: ""; position: absolute; top: auto; bottom: 0; width: 8px; height: 8px; }
.tab.active::before { left: -8px; background: radial-gradient(circle at 0 0, transparent 7.5px, #ffdfe5 8px); }
.tab.active::after { right: -8px; background: radial-gradient(circle at 100% 0, transparent 7.5px, #ffdfe5 8px); }
.plus { width: 13px; height: 13px; margin-left: 17px; }
.wins { display: flex; margin-left: auto; padding-right: 12px; }
.wins svg { width: 12px; height: 12px; }
.wins svg:nth-child(1) { margin-right: 34px; }
.wins svg:nth-child(2) { margin-right: 20px; }
.wins svg:nth-child(3) { margin-right: 21px; }

.toolbar { height: 42px; background: #ffdfe5; display: flex; align-items: center; padding: 0 5px 0 14px; }
.nav1, .nav2, .nav3 { width: 16px; height: 16px; margin-right: 16px; }
.nav3 { margin-right: 14px; }
.omni { width: 1608px; height: 34px; border-radius: 17px; background: #e0c5ca; display: flex; align-items: center; padding-left: 10px; color: #66585c; margin-right: 14px; }
.info { width: 16px; height: 16px; margin-right: 8px; }
.url { width: 1517px; letter-spacing: -0.37px; }
.url i { font-style: normal; color: #26191d; }
.share, .star { width: 15px; height: 15px; margin-right: 16px; }
.star { width: 17px; height: 17px; margin-right: 0; }
.e1, .e2, .e3 { width: 16px; height: 16px; margin-right: 16px; }
.e3 { margin-right: 17px; }
.e4 { width: 14px; height: 14px; margin-right: 14px; }
.avatar { width: 22px; height: 22px; border-radius: 50%; background: #5c6bc0; color: #fff; font-size: 12px; line-height: 22px; text-align: center; margin-right: 20px; }
.e6 { width: 4px; height: 16px; }

.bookmarks { height: 33px; background: #ffdfe5; display: flex; align-items: center; padding: 0 0 5px 14px; color: #2b1f23; border-bottom: 1px solid #d0b3ba; }
.bookmarks a { display: flex; align-items: center; gap: 8px; flex: none; }
.bookmarks svg { width: 16px; height: 16px; }
.bookmarks a:nth-child(1) { width: 79px; }
.bookmarks a:nth-child(2) { width: 100px; }
.bookmarks a:nth-child(3) { width: 78px; }
.bookmarks a:nth-child(4) { width: 104px; }
.bookmarks a:nth-child(5) { width: 92px; }
.bookmarks a:nth-child(6) { width: 145px; }
.bookmarks a:nth-child(7) { width: 80px; }
.bookmarks a:nth-child(8) { width: 152px; }
.bookmarks a:nth-child(9) { width: 151px; }
.bookmarks a:nth-child(10) { width: 133px; }
.bookmarks a:nth-child(11) { width: 99px; }
.bookmarks a:nth-child(12) { width: 149px; }
.bookmarks a:nth-child(13) { width: 148px; }
.bookmarks a:nth-child(14) { width: 150px; }

.view { height: 875px; display: flex; flex: none; overflow: hidden; }
.page { width: 1905px; background: #1a1d21; color: #dee2e6; display: flex; flex-direction: column; }
.navbar { height: 56px; flex: none; background: #343a40; display: flex; align-items: center; padding: 0 16px 2px 15px; }
.logo { width: 31px; height: 31px; margin-right: 16px; }
.brand { font-size: 20px; color: #fff; width: 132px; }
.nl { font-size: 16px; color: #999c9f; margin-right: 16px; padding-top: 1px; }
.caret::after { content: ""; display: inline-block; margin-left: 4px; vertical-align: 4px; border: 4px solid transparent; border-top-color: #999c9f; border-bottom: 0; }
.theme { margin-left: auto; display: flex; height: 31px; width: 90px; border-radius: 3px; overflow: hidden; background: #6c757d; margin-top: 1px; }
.theme span { width: 32px; display: flex; align-items: center; justify-content: center; padding-bottom: 3px; }
.theme .moon { width: 26px; }
.theme span.on { background: #545b62; border: 1px solid #4e555b; }
.theme svg { width: 15px; height: 15px; }

.checks { display: flex; padding: 0 0 2px 15px; height: 54px; align-items: center; flex: none; font-size: 16px; }
.checks label { display: flex; align-items: center; gap: 8px; margin-right: 20px; color: #5b9bf0; }
.checks svg { width: 16px; height: 16px; }

.expr { margin: 0 15px; height: 38px; display: flex; flex: none; border: 1px solid #6c757d; border-radius: 4px; overflow: hidden; }
.expr span { display: flex; align-items: center; justify-content: center; background: #343a40; }
.pre { width: 41px; border-right: 1px solid #6c757d; }
.expr .pre svg, .btn-b svg { width: 16px; height: 16px; }
.field { flex: 1; padding-left: 14px; font: 15px/36px "DejaVu Sans Mono", monospace; color: #ced4da; }
.btn-a { width: 39px; border-left: 1px solid #6c757d; }
.btn-a svg { width: 14px; height: 14px; }
.btn-b { width: 41px; border-left: 1px solid #6c757d; }
.expr .exec { width: 84px; background: #007bff; color: #c6e2ff; font-size: 16px; margin: -1px -1px -1px 0; }

.tabrow { display: flex; height: 51px; padding: 10px 15px 0; flex: none; font-size: 16px; }
.t1 { width: 72px; line-height: 41px; padding-left: 17px; color: #007bff; }
.t2 { width: 79px; height: 42px; line-height: 40px; text-align: center; color: #fff; border: 1px solid #495057; border-bottom: 0; border-radius: 4px 4px 0 0; background: #1a1d21; position: relative; }
.stats { margin-left: auto; display: flex; gap: 12px; font-size: 11.2px; color: #9da1a5; padding-top: 2px; }

.panel { margin: 0 15px; flex: 1; border: 1px solid #343a40; border-bottom: 0; }
.controls { display: flex; padding: 10px 10px 0; height: 49px; gap: 20px; font-size: 14px; }
.controls > div { height: 31px; display: flex; border-radius: 3px; overflow: hidden; }
.grp { border: 1px solid #6c757d; }
.grp span { background: #6c757d; display: flex; align-items: center; justify-content: center; flex: 1; }
.grp svg { width: 14px; height: 14px; }
.grp .in { background: #000; color: #f0f0f0; flex: none; }
.g1 { width: 119px; } .g1 .in { width: 48px; }
.g2 { width: 270px; } .g2 .in { width: 200px; padding-left: 6px; gap: 30px; } .g2 .in svg { width: 9px; height: 9px; }
.grp span:last-child svg { margin-left: 1px; }
.res { width: 90px; border: 1px solid #6c757d; background: #000; color: #6c757d; align-items: center; justify-content: center; }
.g3 { width: 70px; } .g3 svg { width: 16px; height: 16px; }
.grp .on { background: #545b62; }
.controls .hide { width: 117px; background: #545b62; color: #dee2e6; align-items: center; justify-content: center; padding-bottom: 1px; }

.chart { font-size: 10.8px; }
.ylab { fill: #545454; }
.legend { display: flex; padding: 17px 0 0 73px; font-size: 12px; color: #d3d6d9; }
.sw { width: 11px; height: 11px; margin: 4px 6px 0 0; border: 1px solid #ccc; background: #008000; box-shadow: inset 0 0 0 1px #1a1d21; flex: none; }
.ltext p { margin: 0; line-height: 20.4px; white-space: nowrap; }

.scroll { width: 15px; background: #f1f1f1; display: flex; flex-direction: column; align-items: center; padding: 6px 0 5px; }
.up { border: 4px solid transparent; border-top: 0; border-bottom-color: #8b8b8b; }
.thumb { width: 11px; height: 179px; margin-top: 5px; background: #c1c1c1; }
.down { margin-top: auto; border: 4px solid transparent; border-bottom: 0; border-top-color: #505050; }

.desk { flex: 1; display: flex; padding: 1px 0 0 96px; }
.dock { width: 1728px; height: 64px; background: #263b3e; border: 1px solid #4c4a4b; border-radius: 8px; display: flex; align-items: center; }
.app { width: 62px; height: 62px; display: flex; align-items: center; justify-content: center; position: relative; flex: none; }
.app > svg { width: 42px; height: 46px; transform: scaleY(.89); }
.run { width: 58px; height: 58px; margin: 0 2px; background: #4f6265; border-radius: 10px; }
.d1::after, .d2::after, .run::after { content: ""; position: absolute; bottom: 2px; left: 29px; width: 5px; height: 5px; border-radius: 50%; background: #e0304e; }
.d2::after { left: 25px; box-shadow: 8px 0 0 #e0304e; }
.run::after { left: 23px; bottom: 0; box-shadow: 8px 0 0 #e0304e; }
.app em { position: absolute; right: 4px; top: 4px; width: 20px; height: 20px; border-radius: 50%; background: #0e9a20; color: #fff; font: 12px/20px Ubuntu, "Noto Sans", sans-serif; text-align: center; box-shadow: 0 0 2px #000; }
.slack { --a: #36c5f0; --b: #2eb67d; --c: #ecb22e; --d: #e01e5a; }
.cal span { position: absolute; color: #fff; font: 400 23px Ubuntu, "Noto Sans", sans-serif; }
.dsep { width: 1px; height: 42px; background: #5d6c6e; margin: 0 1px; }
.grid { width: 35px; }
.dock .grid > svg { width: 28px; height: 32px; }
```
